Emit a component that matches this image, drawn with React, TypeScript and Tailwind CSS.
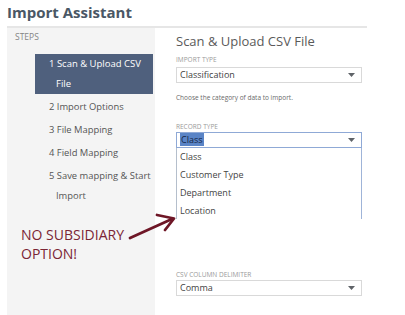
import React from "react";

const Caret = () => (
  <svg width="7" height="4" viewBox="0 0 7 4" className="shrink-0">
    <path d="M0 0 L7 0 L3.5 4 Z" fill="#5f6368" />
  </svg>
);

function Select({ value, active }: { value: React.ReactNode; active?: boolean }) {
  return (
    <div
      className={`w-[186px] h-[16px] flex items-center justify-between pl-[3px] pr-[6px] bg-white border ${
        active ? "border-[#8fa9d6]" : "border-[#d9d9d9]"
      }`}
    >
      <span className="text-[9px] leading-[14px] text-[#3f3f3f]">{value}</span>
      <Caret />
    </div>
  );
}

export default function App() {
  const steps = ["2 Import Options", "3 File Mapping", "4 Field Mapping", "5 Save mapping & Start Import"];
  return (
    <div className="relative w-[405px] h-[315px] bg-white overflow-hidden font-['Open_Sans',sans-serif]">
      <h1 className="pl-[7px] pt-[2px] h-[26px] text-[15px] leading-[20px] font-bold text-[#4a5765]">
        Import Assistant
      </h1>
      <div className="ml-[7px] w-[360px] h-[289px] border-t-2 border-[#e6e6e6] flex">
        <div className="w-[148px] h-full bg-[#f4f4f4] pt-[4px]">
          <div className="pl-[8px] text-[8.5px] leading-[10px] text-[#858585]">STEPS</div>
          <div className="ml-[28px] mt-[12px] flex flex-col gap-[3px]">
            <div className="mr-[2px] bg-[#4f607d] text-white text-[9.5px] leading-[20px] pl-[21px] -indent-[7px] pr-[4px]">
              1 Scan &amp; Upload CSV File
            </div>
            {steps.map((s) => (
              <div key={s} className="text-[#555] text-[9.4px] leading-[20px] pl-[21px] -indent-[7px]">
                {s}
              </div>
            ))}
          </div>
          <div className="pl-[14px] mt-[19px] text-[14px] leading-[19px] text-[#7b2535]">
            NO SUBSIDIARY
            <br />
            OPTION!
          </div>
        </div>
        <div className="pl-[21px] flex-1 relative">
          <div className="mt-[4px] text-[13px] leading-[18px] text-[#5a5a5a]">Scan &amp; Upload CSV File</div>
          <div className="mt-[6px] text-[6.5px] leading-[8px] text-[#9a9a9a]">IMPORT TYPE</div>
          <div className="mt-[3px]">
            <Select value="Classification" />
          </div>
          <div className="mt-[11px] text-[6.5px] leading-[8px] text-[#6a6a6a]">Choose the category of data to import.</div>
          <div className="mt-[21px] text-[6.5px] leading-[8px] text-[#9a9a9a]">RECORD TYPE</div>
          <div className="mt-[1px] relative">
            <Select
              active
              value={<span className="bg-[#5a84c6] text-[#142447] px-[1px]">Class</span>}
            />
            <div className="absolute left-0 top-[16px] w-[186px] h-[71px] overflow-hidden bg-white border-l border-r border-l-[#b5bfcc] border-r-[#9fb4d8]">
              {["Class", "Customer Type", "Department", "Location"].map((o) => (
                <div key={o} className="h-[18px] pl-[3px] text-[9px] leading-[18px] text-[#444]">
                  {o}
                </div>
              ))}
            </div>
          </div>
          <div className="mt-[123px] text-[6.5px] leading-[8px] text-[#9a9a9a]">CSV COLUMN DELIMITER</div>
          <div className="mt-[1px]">
            <Select value="Comma" />
          </div>
        </div>
      </div>
      <svg className="absolute left-0 top-0 pointer-events-none" width="405" height="315">
        <path d="M130 238 L172 219" stroke="#6e1626" strokeWidth="2.8" fill="none" strokeLinecap="round" />
        <path d="M157 215 L174 218.5 L165 230" stroke="#6e1626" strokeWidth="2.8" fill="none" strokeLinecap="round" strokeLinejoin="round" />
      </svg>
    </div>
  );
}
